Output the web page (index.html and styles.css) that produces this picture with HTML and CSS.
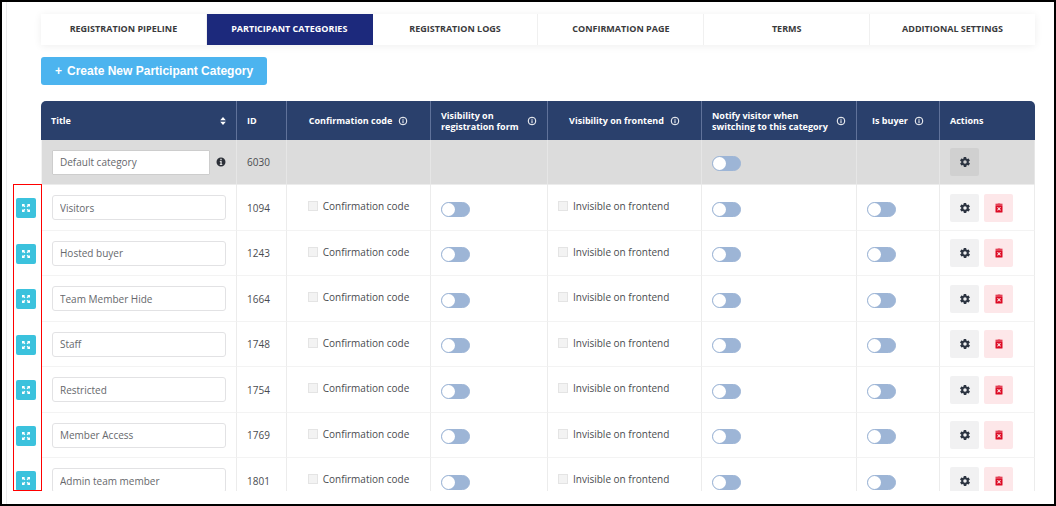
FILE: index.html
```html
<!DOCTYPE html>
<html lang="en">
<head>
    <meta charset="UTF-8">
    <meta name="viewport" content="width=device-width, initial-scale=1.0">
    <title>Participant Categories</title>
    <link rel="stylesheet" href="styles.css">
</head>
<body>
    <svg class="sprite" aria-hidden="true">
        <symbol id="i-expand" viewBox="0 0 10 10">
            <path d="M1 1h3L3.2 1.9 4.4 3.2 3.3 4.3 2 3.1 1 4zM9 1v3L8 3.1 6.7 4.3 5.6 3.2 6.8 1.9 6 1zM1 9V6l1 .9 1.3-1.2 1.1 1.1L3.2 8.1 4 9zM9 9H6l.8-.9-1.2-1.3 1.1-1.1L8 6.9 9 6z"/>
        </symbol>
        <symbol id="i-gear" viewBox="2 2 20 20">
            <path d="M19.4 13c0-.3.1-.6.1-1s0-.7-.1-1l2.1-1.6c.2-.2.2-.4.1-.6l-2-3.5c-.1-.2-.4-.3-.6-.2l-2.5 1c-.5-.4-1.1-.7-1.7-1l-.4-2.6c0-.3-.2-.5-.5-.5h-4c-.2 0-.5.2-.5.5l-.4 2.6c-.6.3-1.2.6-1.7 1l-2.5-1c-.2-.1-.5 0-.6.2l-2 3.5c-.1.2-.1.4.1.6L4.6 11c0 .3-.1.7-.1 1s0 .7.1 1l-2.1 1.6c-.2.2-.2.4-.1.6l2 3.5c.1.2.4.3.6.2l2.5-1c.5.4 1.1.7 1.7 1l.4 2.6c0 .3.3.5.5.5h4c.3 0 .5-.2.5-.5l.4-2.6c.6-.3 1.2-.6 1.7-1l2.5 1c.2.1.5 0 .6-.2l2-3.5c.1-.2.1-.4-.1-.6zM12 15.5a3.5 3.5 0 1 1 0-7 3.5 3.5 0 0 1 0 7z"/>
        </symbol>
        <symbol id="i-trash" viewBox="0 0 8 10">
            <path fill-rule="evenodd" d="M.5.8h2L3 .4h2l.5.4h2v1h-7zM.5 2.2h7V9q0 .6-.6.6H1.1Q.5 9.6.5 9zM2.1 4.6 3.3 5.8 2.1 7l.7.7L4 6.5l1.200 1.200.7-.7-1.200-1.200 1.200-1.200-.7-.7L4 5.100 2.800 3.900z"/>
        </symbol>
        <symbol id="i-info" viewBox="0 0 10 10">
            <circle cx="5" cy="5" r="3.8" fill="none" stroke="currentColor"/>
            <path d="M4.5 2.7h1v1h-1zM4.5 4.2h1v3.1h-1z"/>
        </symbol>
        <symbol id="i-info-solid" viewBox="0 0 10 10">
            <path fill-rule="evenodd" d="M5 .5a4.5 4.5 0 1 1 0 9 4.5 4.5 0 0 1 0-9zM4.3 1.8v1.4h1.4V1.8zM3.8 4v1h.6v2h-.6v1h2.500V7h-.6V4z"/>
        </symbol>
        <symbol id="i-sort" viewBox="0 0 6 10">
            <path d="M3 1 5.800 4.300H.2zM3 9 .2 5.700h5.600z"/>
        </symbol>
    </svg>

    <main class="page">
        <nav class="tabs">
            <a href="#">REGISTRATION PIPELINE</a>
            <a href="#" class="active">PARTICIPANT CATEGORIES</a>
            <a href="#">REGISTRATION LOGS</a>
            <a href="#">CONFIRMATION PAGE</a>
            <a href="#">TERMS</a>
            <a href="#">ADDITIONAL SETTINGS</a>
        </nav>

        <button type="button" class="create-btn"><span>+</span>Create New Participant Category</button>

        <div class="table-wrap">
            <table class="categories">
                <colgroup>
                    <col class="col-drag">
                    <col>
                    <col class="col-id">
                    <col class="col-code">
                    <col class="col-form">
                    <col class="col-frontend">
                    <col class="col-notify">
                    <col class="col-buyer">
                    <col class="col-actions">
                </colgroup>
                <thead>
                    <tr>
                        <td class="drag"></td>
                        <th><div class="head spread">Title <svg class="sort"><use href="#i-sort"/></svg></div></th>
                        <th>ID</th>
                        <th><div class="head center">Confirmation code <svg class="info"><use href="#i-info"/></svg></div></th>
                        <th><div class="head spread"><span>Visibility on<br>registration form</span> <svg class="info"><use href="#i-info"/></svg></div></th>
                        <th><div class="head center">Visibility on frontend <svg class="info"><use href="#i-info"/></svg></div></th>
                        <th><div class="head spread"><span>Notify visitor when<br>switching to this category</span> <svg class="info"><use href="#i-info"/></svg></div></th>
                        <th><div class="head center">Is buyer <svg class="info"><use href="#i-info"/></svg></div></th>
                        <th>Actions</th>
                    </tr>
                </thead>
                <tbody>
                    <tr class="default">
                        <td class="drag"></td>
                        <td><div class="title"><input type="text" class="text" aria-label="Title" value="Default category"><svg class="info-solid"><use href="#i-info-solid"/></svg></div></td>
                        <td>6030</td>
                        <td></td>
                        <td></td>
                        <td></td>
                        <td><input type="checkbox" class="toggle" aria-label="Notify visitor"></td>
                        <td></td>
                        <td><div class="actions"><button type="button" class="btn" aria-label="Settings"><svg><use href="#i-gear"/></svg></button></div></td>
                    </tr>
                    <tr>
                        <td class="drag"><button type="button" class="handle" aria-label="Move"><svg><use href="#i-expand"/></svg></button></td>
                        <td><input type="text" class="text" aria-label="Title" value="Visitors"></td>
                        <td>1094</td>
                        <td><label class="check center"><input type="checkbox" disabled>Confirmation code</label></td>
                        <td><input type="checkbox" class="toggle" aria-label="Visibility on registration form"></td>
                        <td><label class="check"><input type="checkbox" disabled>Invisible on frontend</label></td>
                        <td><input type="checkbox" class="toggle" aria-label="Notify visitor"></td>
                        <td><input type="checkbox" class="toggle" aria-label="Is buyer"></td>
                        <td><div class="actions"><button type="button" class="btn" aria-label="Settings"><svg><use href="#i-gear"/></svg></button><button type="button" class="btn delete" aria-label="Delete"><svg><use href="#i-trash"/></svg></button></div></td>
                    </tr>
                    <tr>
                        <td class="drag"><button type="button" class="handle" aria-label="Move"><svg><use href="#i-expand"/></svg></button></td>
                        <td><input type="text" class="text" aria-label="Title" value="Hosted buyer"></td>
                        <td>1243</td>
                        <td><label class="check center"><input type="checkbox" disabled>Confirmation code</label></td>
                        <td><input type="checkbox" class="toggle" aria-label="Visibility on registration form"></td>
                        <td><label class="check"><input type="checkbox" disabled>Invisible on frontend</label></td>
                        <td><input type="checkbox" class="toggle" aria-label="Notify visitor"></td>
                        <td><input type="checkbox" class="toggle" aria-label="Is buyer"></td>
                        <td><div class="actions"><button type="button" class="btn" aria-label="Settings"><svg><use href="#i-gear"/></svg></button><button type="button" class="btn delete" aria-label="Delete"><svg><use href="#i-trash"/></svg></button></div></td>
                    </tr>
                    <tr>
                        <td class="drag"><button type="button" class="handle" aria-label="Move"><svg><use href="#i-expand"/></svg></button></td>
                        <td><input type="text" class="text" aria-label="Title" value="Team Member Hide"></td>
                        <td>1664</td>
                        <td><label class="check center"><input type="checkbox" disabled>Confirmation code</label></td>
                        <td><input type="checkbox" class="toggle" aria-label="Visibility on registration form"></td>
                        <td><label class="check"><input type="checkbox" disabled>Invisible on frontend</label></td>
                        <td><input type="checkbox" class="toggle" aria-label="Notify visitor"></td>
                        <td><input type="checkbox" class="toggle" aria-label="Is buyer"></td>
                        <td><div class="actions"><button type="button" class="btn" aria-label="Settings"><svg><use href="#i-gear"/></svg></button><button type="button" class="btn delete" aria-label="Delete"><svg><use href="#i-trash"/></svg></button></div></td>
                    </tr>
                    <tr>
                        <td class="drag"><button type="button" class="handle" aria-label="Move"><svg><use href="#i-expand"/></svg></button></td>
                        <td><input type="text" class="text" aria-label="Title" value="Staff"></td>
                        <td>1748</td>
                        <td><label class="check center"><input type="checkbox" disabled>Confirmation code</label></td>
                        <td><input type="checkbox" class="toggle" aria-label="Visibility on registration form"></td>
                        <td><label class="check"><input type="checkbox" disabled>Invisible on frontend</label></td>
                        <td><input type="checkbox" class="toggle" aria-label="Notify visitor"></td>
                        <td><input type="checkbox" class="toggle" aria-label="Is buyer"></td>
                        <td><div class="actions"><button type="button" class="btn" aria-label="Settings"><svg><use href="#i-gear"/></svg></button><button type="button" class="btn delete" aria-label="Delete"><svg><use href="#i-trash"/></svg></button></div></td>
                    </tr>
                    <tr>
                        <td class="drag"><button type="button" class="handle" aria-label="Move"><svg><use href="#i-expand"/></svg></button></td>
                        <td><input type="text" class="text" aria-label="Title" value="Restricted"></td>
                        <td>1754</td>
                        <td><label class="check center"><input type="checkbox" disabled>Confirmation code</label></td>
                        <td><input type="checkbox" class="toggle" aria-label="Visibility on registration form"></td>
                        <td><label class="check"><input type="checkbox" disabled>Invisible on frontend</label></td>
                        <td><input type="checkbox" class="toggle" aria-label="Notify visitor"></td>
                        <td><input type="checkbox" class="toggle" aria-label="Is buyer"></td>
                        <td><div class="actions"><button type="button" class="btn" aria-label="Settings"><svg><use href="#i-gear"/></svg></button><button type="button" class="btn delete" aria-label="Delete"><svg><use href="#i-trash"/></svg></button></div></td>
                    </tr>
                    <tr>
                        <td class="drag"><button type="button" class="handle" aria-label="Move"><svg><use href="#i-expand"/></svg></button></td>
                        <td><input type="text" class="text" aria-label="Title" value="Member Access"></td>
                        <td>1769</td>
                        <td><label class="check center"><input type="checkbox" disabled>Confirmation code</label></td>
                        <td><input type="checkbox" class="toggle" aria-label="Visibility on registration form"></td>
                        <td><label class="check"><input type="checkbox" disabled>Invisible on frontend</label></td>
                        <td><input type="checkbox" class="toggle" aria-label="Notify visitor"></td>
                        <td><input type="checkbox" class="toggle" aria-label="Is buyer"></td>
                        <td><div class="actions"><button type="button" class="btn" aria-label="Settings"><svg><use href="#i-gear"/></svg></button><button type="button" class="btn delete" aria-label="Delete"><svg><use href="#i-trash"/></svg></button></div></td>
                    </tr>
                    <tr>
                        <td class="drag"><button type="button" class="handle" aria-label="Move"><svg><use href="#i-expand"/></svg></button></td>
                        <td><input type="text" class="text" aria-label="Title" value="Admin team member"></td>
                        <td>1801</td>
                        <td><label class="check center"><input type="checkbox" disabled>Confirmation code</label></td>
                        <td><input type="checkbox" class="toggle" aria-label="Visibility on registration form"></td>
                        <td><label class="check"><input type="checkbox" disabled>Invisible on frontend</label></td>
                        <td><input type="checkbox" class="toggle" aria-label="Notify visitor"></td>
                        <td><input type="checkbox" class="toggle" aria-label="Is buyer"></td>
                        <td><div class="actions"><button type="button" class="btn" aria-label="Settings"><svg><use href="#i-gear"/></svg></button><button type="button" class="btn delete" aria-label="Delete"><svg><use href="#i-trash"/></svg></button></div></td>
                    </tr>
                </tbody>
            </table>
            <div class="highlight"></div>
        </div>
    </main>
</body>
</html>
```
FILE: styles.css
```css
* {
    margin: 0;
    padding: 0;
    box-sizing: border-box;
}

body {
    display: flex;
    height: 100vh;
    padding-left: 4px;
    border: 2px solid #000;
    background: #fff;
    color: #4a4c50;
    font-family: "Open Sans", sans-serif;
    font-size: 10px;
}

button,
input {
    font-family: inherit;
    font-size: inherit;
    color: inherit;
}

svg {
    display: block;
    flex: none;
    fill: currentColor;
}

.sprite {
    position: absolute;
    width: 0;
    height: 0;
}

.page {
    flex: 1;
    min-width: 0;
    display: flex;
    flex-direction: column;
    align-items: flex-start;
    padding: 12px 19px 13px 6px;
    border-left: 1px solid #ececee;
}

/* Tabs */
.tabs {
    display: flex;
    align-self: stretch;
    margin-left: 28px;
    box-shadow: 0 1px 8px rgba(0, 0, 0, 0.07);
}

.tabs a {
    flex: 1;
    height: 31px;
    border-right: 1px solid #f0f0f0;
    color: #3a3a3c;
    font-size: 9px;
    font-weight: 700;
    line-height: 30px;
    text-align: center;
    text-decoration: none;
    white-space: nowrap;
}

.tabs a:last-child {
    border-right: 0;
}

.tabs a.active {
    background: #1c297c;
    border-color: #1c297c;
    color: #fff;
}

.create-btn {
    display: flex;
    align-items: center;
    gap: 5px;
    height: 28px;
    margin: 12px 0 16px 28px;
    padding: 0 14px;
    border: 0;
    border-radius: 3px;
    background: #4cb4ef;
    color: #fff;
    font-family: "Liberation Sans", Arial, sans-serif;
    font-size: 12px;
    font-weight: 700;
}

/* Table */
.table-wrap {
    position: relative;
    flex: 1;
    align-self: stretch;
    min-height: 0;
    overflow: hidden;
}

.categories {
    width: 100%;
    table-layout: fixed;
    border-collapse: separate;
    border-spacing: 0;
}

.col-drag { width: 28px; }
.col-id { width: 50px; }
.col-code { width: 144px; }
.col-form { width: 117px; }
.col-frontend { width: 154px; }
.col-notify { width: 155px; }
.col-buyer { width: 83px; }
.col-actions { width: 95px; }

.categories th {
    height: 39px;
    padding: 0 10px;
    border-right: 1px solid #60729a;
    background: #2a406c;
    color: #fff;
    font-size: 9px;
    font-weight: 700;
    line-height: 11px;
    text-align: left;
    white-space: nowrap;
}

.categories th:nth-child(2) {
    border-top-left-radius: 5px;
}

.categories th:last-child {
    border-right: 0;
    border-top-right-radius: 5px;
}

.head {
    display: flex;
    align-items: center;
    gap: 6px;
}

.spread {
    justify-content: space-between;
}

.center {
    justify-content: center;
}

.sort {
    width: 6px;
    height: 10px;
}

.info {
    width: 10px;
    height: 10px;
}

.categories tbody td {
    height: 45px;
    padding: 0 10px;
    border-right: 1px solid #ececec;
    border-bottom: 1px solid #f3f3f3;
}

.categories tbody tr:nth-child(even) td {
    height: 46px;
}

.categories .default td {
    background: #dcdcdc;
    border-right-color: #e6e6e6;
    border-bottom-color: #ececec;
}

.categories tbody td.drag {
    padding: 0 0 0 3px;
    border: 0;
    background: none;
}

.categories tbody td:nth-child(2) {
    border-left: 1px solid #f3f3f3;
}

.handle {
    display: grid;
    place-items: center;
    width: 20px;
    height: 20px;
    border: 0;
    border-radius: 2px;
    background: #3bc2dd;
    color: #fff;
}

.handle svg {
    width: 10px;
    height: 10px;
}

.title {
    display: flex;
    align-items: center;
    gap: 6px;
}

.text {
    display: block;
    width: 100%;
    height: 25px;
    padding: 0 7px;
    border: 1px solid #e2e2e4;
    border-radius: 3px;
    background: #fff;
    color: #66686c;
}

.title .text {
    flex: 1;
    min-width: 0;
    border-color: #cdcdcd;
    border-radius: 1px;
}

.info-solid {
    width: 10px;
    height: 10px;
    color: #2c3038;
}

.check {
    display: flex;
    align-items: center;
    gap: 5px;
    padding-bottom: 3px;
    white-space: nowrap;
}

.check input {
    appearance: none;
    width: 10px;
    height: 10px;
    border: 1px solid #e4e4e4;
    background: #f3f3f3;
}

.toggle {
    appearance: none;
    display: block;
    width: 29px;
    height: 15px;
    margin-top: 3px;
    border: 1px solid #9db5d6;
    border-radius: 8px;
    background: #9db5d6;
}

.toggle::before {
    content: "";
    display: block;
    width: 13px;
    height: 13px;
    border-radius: 50%;
    background: #fff;
}

.toggle:checked::before {
    margin-left: auto;
}

.actions {
    display: flex;
    gap: 5px;
}

.btn {
    display: grid;
    place-items: center;
    width: 29px;
    height: 28px;
    border: 0;
    border-radius: 2px;
    background: #f1f1f2;
    color: #2c3441;
}

.btn svg {
    width: 10px;
    height: 10px;
}

.default .btn {
    background: #d0d0d0;
}

.btn.delete {
    background: #fde7e9;
    color: #dc0a24;
}

/* Red outline over the drag handles */
.highlight {
    position: absolute;
    top: 83px;
    bottom: 0;
    left: 0;
    width: 29px;
    border: 1px solid #f00;
}
```
